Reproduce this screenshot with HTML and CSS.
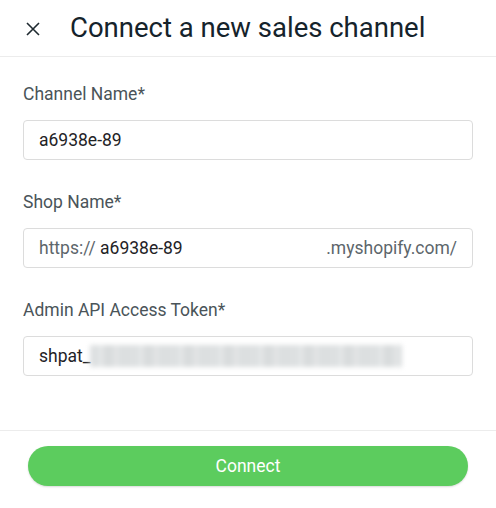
FILE: index.html
```html
<!DOCTYPE html>
<html>
<head>
<meta charset="utf-8">
<link rel="stylesheet" href="styles.css">
</head>
<body>
<div class="modal">
  <header class="head">
    <svg class="close" width="14" height="14" viewBox="0 0 14 14"><path d="M1 1L13 13M13 1L1 13" stroke="#1f2a30" stroke-width="1.6" fill="none"/></svg>
    <h1 class="title">Connect a new sales channel</h1>
  </header>
  <main class="form">
    <div class="field">
      <label class="label">Channel Name*</label>
      <div class="input"><span class="val">a6938e-89</span></div>
    </div>
    <div class="field">
      <label class="label">Shop Name*</label>
      <div class="input shop"><span class="muted">https://</span><span class="val">&nbsp;a6938e-89</span><span class="muted suffix">.myshopify.com/</span></div>
    </div>
    <div class="field">
      <label class="label">Admin API Access Token*</label>
      <div class="input"><span class="val">shpat_</span><span class="blur"></span></div>
    </div>
  </main>
  <footer class="foot">
    <button class="btn">Connect</button>
  </footer>
</div>
</body>
</html>
```

FILE: styles.css
```css
* { box-sizing: border-box; }
html, body { margin: 0; padding: 0; background: #fff; }
body { font-family: Roboto, "Liberation Sans", sans-serif; width: 496px; height: 508px; overflow: hidden; }
.modal { display: flex; flex-direction: column; height: 508px; }
.head { height: 57px; border-bottom: 1px solid #ececec; display: flex; align-items: center; padding-left: 26px; }
.close { margin-right: 30px; margin-top: 1px; }
.title { margin: 0; font-size: 27.5px; line-height: 32px; font-weight: 400; color: #15232b; }
.form { padding: 27px 23px 0 23px; flex: 1; }
.field { margin-bottom: 32px; }
.label { display: block; font-size: 17.5px; line-height: 20px; color: #4a5459; margin-bottom: 16px; }
.input { height: 40px; border: 1px solid #dcdcdc; border-radius: 4px; display: flex; align-items: center; padding: 0 15px; font-size: 17.5px; }
.val { color: #1f2326; }
.muted { color: #5d666b; }
.suffix { margin-left: auto; }
.blur { display: block; width: 312px; height: 22px; margin-left: -1px; filter: blur(2.5px); background: repeating-linear-gradient(90deg, #dde0e1 0 9px, #e6e8e9 9px 13px, #d9dcdd 13px 24px, #e4e6e7 24px 28px, #dcdfe0 28px 40px); }
.foot { height: 78px; border-top: 1px solid #ececec; display: flex; align-items: flex-start; justify-content: center; padding-top: 15px; }
.btn { width: 440px; height: 40px; border: none; border-radius: 20px; background: #5ccc5e; color: #fff; font-family: Roboto, "Liberation Sans", sans-serif; font-size: 17.5px; box-shadow: 0 1px 2px rgba(0,0,0,0.15); }
```
